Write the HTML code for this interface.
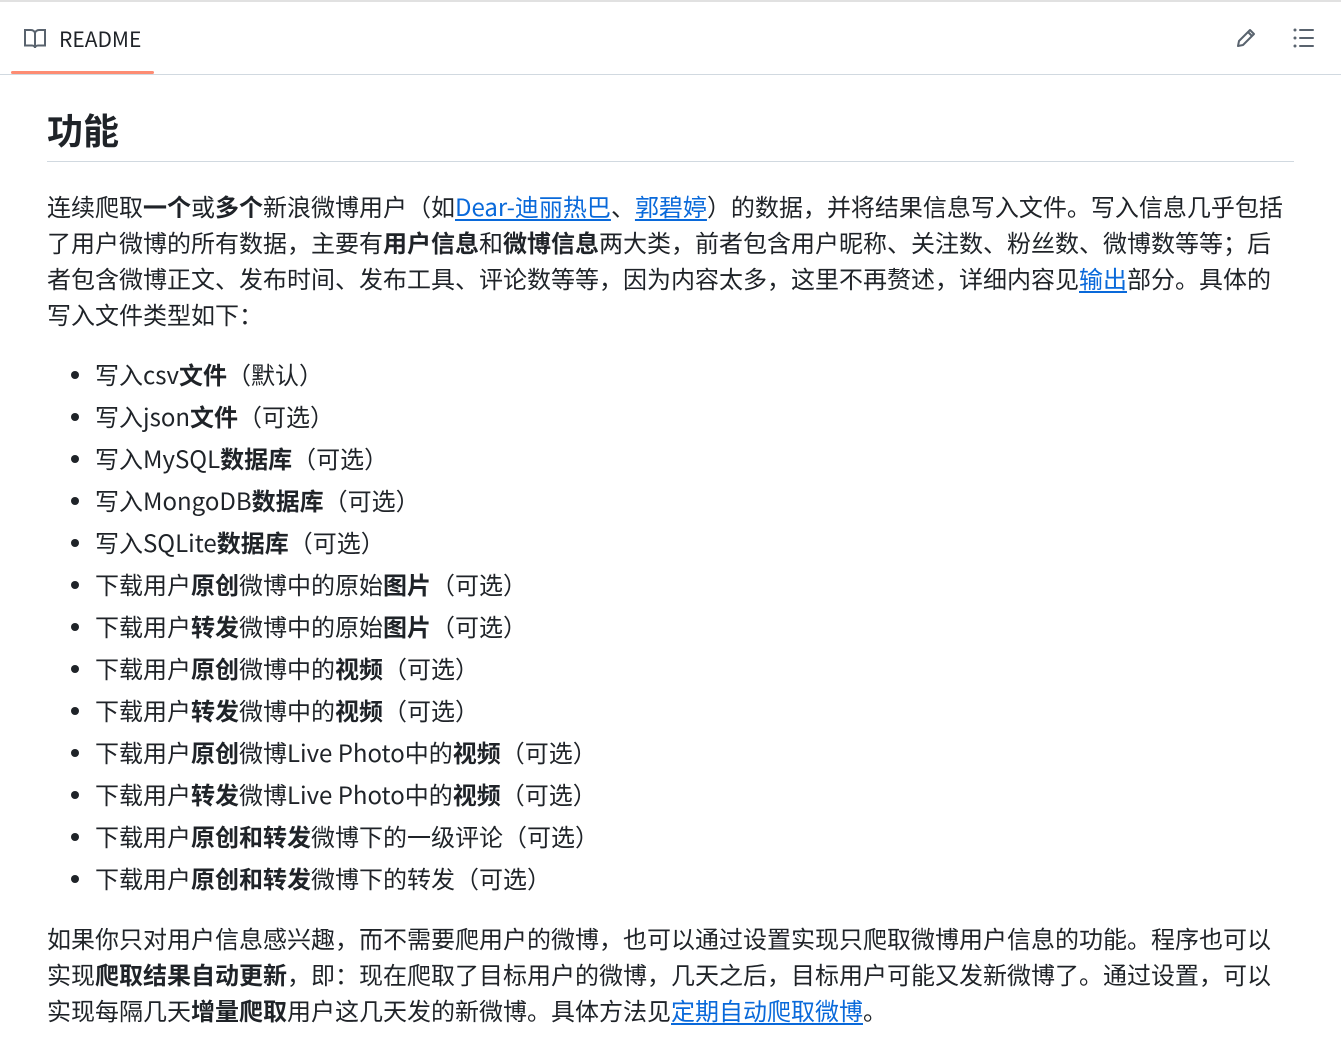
<!DOCTYPE html>
<html><head><meta charset="utf-8"><style>
*{margin:0;padding:0;box-sizing:border-box}
body{width:1341px;height:1057px;background:#fff;font-family:"Liberation Sans","Noto Sans CJK SC",sans-serif;color:#1f2328;overflow:hidden;position:relative}
.top{position:absolute;left:0;top:0;width:1341px;height:2px;background:#e1e1e1}
.hdr{position:absolute;left:0;top:74px;width:1341px;height:1px;background:#d1d9e0}
.tab{position:absolute;left:11px;top:71px;width:143px;height:3px;background:#fd8c73;border-radius:2px}
.rt{position:absolute;left:59px;top:27px;font-size:21px;line-height:24px;font-family:"Noto Sans CJK SC",sans-serif}
h1{position:absolute;left:47px;top:105px;font-size:36px;line-height:48px;font-weight:700;font-family:"Noto Sans CJK SC",sans-serif}
.hr{position:absolute;left:47px;top:161px;width:1247px;height:1px;background:#d1d9e0}
.t{position:absolute;left:47px;font-size:24px;line-height:36px;white-space:nowrap;font-family:"Noto Sans CJK SC",sans-serif}
a{color:#0969da;text-decoration:underline;text-underline-offset:3px}
b{font-weight:700}
.li{position:absolute;left:95px;font-size:24px;line-height:36px;white-space:nowrap;font-family:"Noto Sans CJK SC",sans-serif}
.li:before{content:"";position:absolute;left:-24px;top:15px;width:8px;height:8px;border-radius:50%;background:#1f2328}
</style></head><body>
<div class="top"></div>
<svg style="position:absolute;left:23px;top:28px" width="24" height="22" viewBox="0 0 24 22" fill="none" stroke="#59636e" stroke-width="2"><path d="M2 2h6c2 0 4 1.5 4 3.5V20c0-1.5-1.5-2.5-3-2.5H2z M22 2h-6c-2 0-4 1.5-4 3.5V20c0-1.5 1.5-2.5 3-2.5h7z"/></svg>
<div class="rt">README</div>
<svg style="position:absolute;left:1235px;top:27px" width="22" height="22" viewBox="0 0 22 22" fill="none" stroke="#59636e" stroke-width="2" stroke-linejoin="round"><path d="M15 3l4 4L8 18l-5 1 1-5z"/><path d="M13 5l4 4"/></svg>
<svg style="position:absolute;left:1292px;top:28px" width="24" height="20" viewBox="0 0 24 20" fill="#59636e"><circle cx="3" cy="2" r="1.5"/><circle cx="3" cy="10" r="1.5"/><circle cx="3" cy="18" r="1.5"/><rect x="7" y="1" width="15" height="2" rx="1"/><rect x="7" y="9" width="15" height="2" rx="1"/><rect x="7" y="17" width="15" height="2" rx="1"/></svg>
<div class="tab"></div>
<div class="hdr"></div>
<h1>功能</h1>
<div class="hr"></div>
<div class="t" style="top:188px">连续爬取<b>一个</b>或<b>多个</b>新浪微博用户（如<a>Dear-迪丽热巴</a>、<a>郭碧婷</a>）的数据，并将结果信息写入文件。写入信息几乎包括</div>
<div class="t" style="top:224px">了用户微博的所有数据，主要有<b>用户信息</b>和<b>微博信息</b>两大类，前者包含用户昵称、关注数、粉丝数、微博数等等；后</div>
<div class="t" style="top:260px">者包含微博正文、发布时间、发布工具、评论数等等，因为内容太多，这里不再赘述，详细内容见<a>输出</a>部分。具体的</div>
<div class="t" style="top:296px">写入文件类型如下：</div>
<div class="li" style="top:356px">写入csv<b>文件</b>（默认）</div>
<div class="li" style="top:398px">写入json<b>文件</b>（可选）</div>
<div class="li" style="top:440px">写入MySQL<b>数据库</b>（可选）</div>
<div class="li" style="top:482px">写入MongoDB<b>数据库</b>（可选）</div>
<div class="li" style="top:524px">写入SQLite<b>数据库</b>（可选）</div>
<div class="li" style="top:566px">下载用户<b>原创</b>微博中的原始<b>图片</b>（可选）</div>
<div class="li" style="top:608px">下载用户<b>转发</b>微博中的原始<b>图片</b>（可选）</div>
<div class="li" style="top:650px">下载用户<b>原创</b>微博中的<b>视频</b>（可选）</div>
<div class="li" style="top:692px">下载用户<b>转发</b>微博中的<b>视频</b>（可选）</div>
<div class="li" style="top:734px">下载用户<b>原创</b>微博Live Photo中的<b>视频</b>（可选）</div>
<div class="li" style="top:776px">下载用户<b>转发</b>微博Live Photo中的<b>视频</b>（可选）</div>
<div class="li" style="top:818px">下载用户<b>原创和转发</b>微博下的一级评论（可选）</div>
<div class="li" style="top:860px">下载用户<b>原创和转发</b>微博下的转发（可选）</div>
<div class="t" style="top:920px">如果你只对用户信息感兴趣，而不需要爬用户的微博，也可以通过设置实现只爬取微博用户信息的功能。程序也可以</div>
<div class="t" style="top:956px">实现<b>爬取结果自动更新</b>，即：现在爬取了目标用户的微博，几天之后，目标用户可能又发新微博了。通过设置，可以</div>
<div class="t" style="top:992px">实现每隔几天<b>增量爬取</b>用户这几天发的新微博。具体方法见<a>定期自动爬取微博</a>。</div>
</body></html>
